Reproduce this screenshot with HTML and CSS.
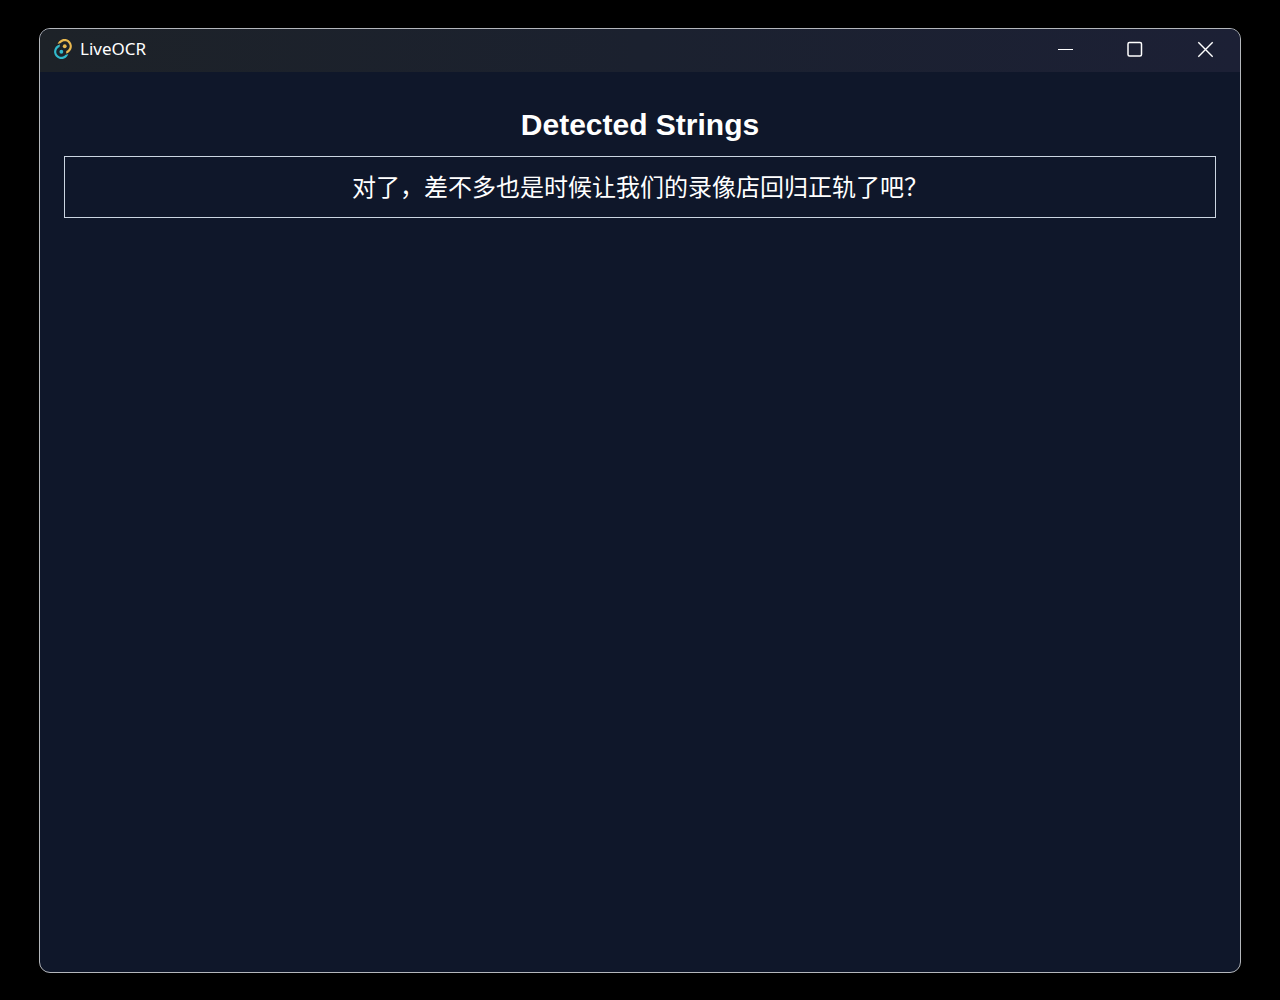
FILE: index.html
```html
<!DOCTYPE html>
<html lang="en">
<head>
<meta charset="utf-8">
<meta name="viewport" content="width=device-width, initial-scale=1">
<title>LiveOCR</title>
<link rel="stylesheet" href="styles.css">
</head>
<body>
<div class="window">
  <header class="titlebar">
    <svg class="logo" viewBox="0 0 206 231" aria-hidden="true">
      <circle cx="123" cy="84" r="22" fill="#e9b84f"/>
      <circle cx="84" cy="147" r="22" fill="#31b9cb"/>
      <path fill="#e9b84f" d="M166.738 154.548C157.86 160.286 148.023 164.269 137.757 166.341C139.858 160.282 141 153.774 141 147C141 144.543 140.85 142.121 140.558 139.743C144.975 138.204 149.215 136.139 153.183 133.575C162.73 127.404 170.292 118.608 174.961 108.244C179.63 97.88 181.207 86.388 179.502 75.149C177.798 63.91 172.884 53.402 165.352 44.888C157.82 36.374 147.99 30.217 137.042 27.155C126.095 24.093 114.496 24.257 103.64 27.627C92.784 30.998 83.132 37.432 75.844 46.155C74.91 47.273 74.021 48.422 73.176 49.599C61.929 50.849 51.036 54.032 40.963 58.956C44.242 48.459 49.565 38.659 56.679 30.144C67.051 17.73 80.786 8.574 96.235 3.778C111.685 -1.019 128.19 -1.253 143.769 3.105C159.348 7.462 173.337 16.225 184.056 28.341C194.775 40.457 201.767 55.41 204.193 71.404C206.619 87.398 204.374 103.752 197.73 118.501C191.086 133.25 180.324 145.767 166.738 154.548ZM41.963 74.275L62.556 76.804C63.046 72.813 63.94 68.902 65.214 65.127C57.047 67.002 49.209 70.087 41.963 74.275Z"/>
      <path fill="#31b9cb" d="M38.405 76.452C47.349 70.671 57.268 66.671 67.617 64.613C65.277 70.967 64 77.834 64 85C64 87.143 64.114 89.26 64.337 91.344C60.009 92.873 55.853 94.909 51.96 97.426C42.413 103.596 34.851 112.392 30.182 122.756C25.513 133.12 23.936 144.612 25.64 155.851C27.345 167.09 32.258 177.598 39.791 186.112C47.323 194.626 57.153 200.784 68.1 203.846C79.048 206.907 90.646 206.743 101.502 203.373C112.359 200.002 122.011 193.568 129.299 184.845C130.237 183.722 131.131 182.567 131.979 181.383C143.235 180.114 154.132 176.91 164.205 171.962C160.929 182.49 155.596 192.319 148.464 200.856C138.092 213.27 124.357 222.426 108.907 227.222C93.458 232.019 76.952 232.253 61.374 227.895C45.795 223.538 31.806 214.775 21.087 202.659C10.368 190.543 3.376 175.59 .95 159.596C-1.476 143.602 .768 127.248 7.412 112.499C14.057 97.75 24.818 85.233 38.405 76.452Z"/>
    </svg>
    <span class="title">LiveOCR</span>
    <button class="control" type="button" aria-label="Minimize">
      <svg class="glyph" viewBox="0 0 16 16"><path d="M1 8.5H16"/></svg>
    </button>
    <button class="control" type="button" aria-label="Maximize">
      <svg class="glyph glyph-box" viewBox="0 0 16 16"><rect x="1" y="1.5" width="13.5" height="13.5" rx="1.5"/></svg>
    </button>
    <button class="control" type="button" aria-label="Close">
      <svg class="glyph glyph-close" viewBox="0 0 16 16"><path d="M1.3 1.3L15.7 15.7M15.7 1.3L1.3 15.7"/></svg>
    </button>
  </header>
  <main class="content">
    <h1 class="heading">Detected Strings</h1>
    <p class="detected" lang="zh-CN">对了，差不多也是时候让我们的录像店回归正轨了吧？</p>
  </main>
</div>
</body>
</html>
```
FILE: styles.css
```css
* {
  box-sizing: border-box;
}

body {
  display: flex;
  min-height: 100vh;
  margin: 0;
  padding: 28px 39px 27px;
  background: #000;
  color: #fff;
}

.window {
  display: flex;
  flex: 1;
  flex-direction: column;
  overflow: hidden;
  border: 1px solid #b4b7bc;
  border-radius: 11px;
  background: #0f172a;
}

.titlebar {
  display: flex;
  align-items: center;
  height: 43px;
  padding: 0 0 3px 14px;
  background: linear-gradient(90deg, #1d2228, #1b212f 50%, #1c2035);
}

.logo {
  width: 18px;
  height: 20px;
  margin-right: 8px;
}

.title {
  flex: 1;
  font: 17px/24px "Noto Sans", "Open Sans", sans-serif;
}

.control {
  display: flex;
  align-items: center;
  justify-content: center;
  width: 70px;
  height: 100%;
  padding: 0;
  border: 0;
  background: transparent;
  color: inherit;
}

.glyph {
  width: 16px;
  height: 16px;
  fill: none;
  stroke: currentColor;
  stroke-width: 1;
}

.glyph-box {
  stroke-width: 1.5;
}

.glyph-close {
  overflow: visible;
  stroke-width: 1.4;
}

.content {
  padding: 35px 24px;
  text-align: center;
}

.heading {
  margin: 0 0 13px;
  font: bold 30px/36px "Liberation Sans", Arial, sans-serif;
}

.detected {
  margin: 0;
  padding: 11px 12px 13px;
  border: 1px solid #cbd5e1;
  font: 24px/36px "Noto Sans CJK SC", sans-serif;
}
```
